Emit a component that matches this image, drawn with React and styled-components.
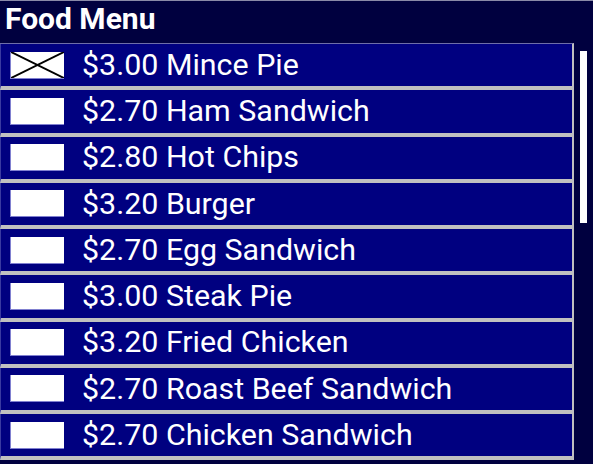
import React from "react";
import styled, { createGlobalStyle } from "styled-components";

const GlobalStyle = createGlobalStyle`
  html, body {
    margin: 0;
    padding: 0;
    background: #00003f;
  }
  body {
    font-family: Roboto, "Noto Sans", sans-serif;
  }
`;

const Frame = styled.div`
  height: 464px;
  border-top: 1px solid #8a8aa8;
  box-sizing: border-box;
  background: #00003f;
  overflow: hidden;
`;

const Title = styled.h1`
  margin: 0;
  height: 42px;
  padding-left: 5px;
  font-size: 30px;
  line-height: 36px;
  font-weight: 700;
  color: #ffffff;
`;

const Body = styled.div`
  display: flex;
`;

const List = styled.ul`
  margin: 0;
  padding: 0;
  list-style: none;
  width: 574px;
  box-sizing: border-box;
  border-top: 1px solid #6e6ea8;
  border-right: 2px solid #c0c0c0;
`;

const Row = styled.li`
  display: flex;
  align-items: center;
  gap: 18px;
  height: 46.25px;
  box-sizing: border-box;
  padding: 0 0 0 9px;
  background: #000080;
  border-bottom: 4px solid #c0c0c0;
  border-left: 1px solid #3a3aa0;
`;

const Thumbnail = styled.div`
  width: 54px;
  height: 27px;
  flex: none;
  box-sizing: border-box;
  background: #ffffff;
  border-left: 1px solid #8080d0;
  border-bottom: 1px solid #8080d0;

  svg {
    display: block;
  }
`;

const Label = styled.span`
  color: #ffffff;
  font-size: 30.4px;
  line-height: 1;
  white-space: nowrap;
`;

const Track = styled.div`
  flex: 1;
  padding: 8px 0 0 6px;
`;

const Thumb = styled.div`
  width: 7px;
  height: 172px;
  background: #ffffff;
`;

const items = [
  { price: "3.00", name: "Mince Pie", broken: true },
  { price: "2.70", name: "Ham Sandwich" },
  { price: "2.80", name: "Hot Chips" },
  { price: "3.20", name: "Burger" },
  { price: "2.70", name: "Egg Sandwich" },
  { price: "3.00", name: "Steak Pie" },
  { price: "3.20", name: "Fried Chicken" },
  { price: "2.70", name: "Roast Beef Sandwich" },
  { price: "2.70", name: "Chicken Sandwich" },
];

const BrokenImage = () => (
  <svg width="53" height="26" viewBox="0 0 53 26">
    <line x1="0" y1="0" x2="53" y2="26" stroke="#000" strokeWidth="2" />
    <line x1="53" y1="0" x2="0" y2="26" stroke="#000" strokeWidth="2" />
  </svg>
);

export default function App() {
  return (
    <>
      <GlobalStyle />
      <Frame>
        <Title>Food Menu</Title>
        <Body>
          <List>
            {items.map((item) => (
              <Row key={item.name}>
                <Thumbnail>{item.broken && <BrokenImage />}</Thumbnail>
                <Label>
                  ${item.price} {item.name}
                </Label>
              </Row>
            ))}
          </List>
          <Track>
            <Thumb />
          </Track>
        </Body>
      </Frame>
    </>
  );
}
